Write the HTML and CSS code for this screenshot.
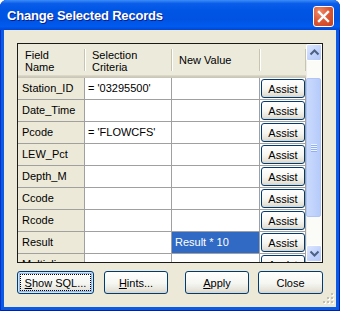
FILE: index.html
```html
<!DOCTYPE html>
<html lang="en">
<head>
  <meta charset="UTF-8">
  <title>Change Selected Records</title>
  <link rel="stylesheet" href="styles.css">
</head>
<body>
  <div class="window">
    <div class="titlebar">
      <span class="title">Change Selected Records</span>
      <span class="close-box">
        <svg width="21" height="21" viewBox="0 0 21 21">
          <path d="M6 6 L15 15 M15 6 L6 15" stroke="#fff" stroke-width="2.4" stroke-linecap="square" fill="none"/>
        </svg>
      </span>
    </div>

    <div class="client">
      <div class="grid">
        <div class="sheet">
          <div class="head">
            <div class="hcell"><span>Field<br>Name</span></div>
            <div class="hcell"><span>Selection<br>Criteria</span></div>
            <div class="hcell"><span class="single">New Value</span></div>
            <div class="hcell"><span></span></div>
          </div>

          <div class="rows">
            <div class="cell field">Station_ID</div>
            <div class="cell">= '03295500'</div>
            <div class="cell"></div>
            <div class="cell act"><button class="assist">Assist</button></div>

            <div class="cell field">Date_Time</div>
            <div class="cell"></div>
            <div class="cell"></div>
            <div class="cell act"><button class="assist">Assist</button></div>

            <div class="cell field">Pcode</div>
            <div class="cell">= 'FLOWCFS'</div>
            <div class="cell"></div>
            <div class="cell act"><button class="assist">Assist</button></div>

            <div class="cell field">LEW_Pct</div>
            <div class="cell"></div>
            <div class="cell"></div>
            <div class="cell act"><button class="assist">Assist</button></div>

            <div class="cell field">Depth_M</div>
            <div class="cell"></div>
            <div class="cell"></div>
            <div class="cell act"><button class="assist">Assist</button></div>

            <div class="cell field">Ccode</div>
            <div class="cell"></div>
            <div class="cell"></div>
            <div class="cell act"><button class="assist">Assist</button></div>

            <div class="cell field">Rcode</div>
            <div class="cell"></div>
            <div class="cell"></div>
            <div class="cell act"><button class="assist">Assist</button></div>

            <div class="cell field">Result</div>
            <div class="cell"></div>
            <div class="cell selected">Result * 10</div>
            <div class="cell act"><button class="assist">Assist</button></div>

            <div class="cell field">Multiplier</div>
            <div class="cell"></div>
            <div class="cell"></div>
            <div class="cell act"><button class="assist">Assist</button></div>
          </div>
        </div>

        <div class="vscroll">
          <div class="sb-btn">
            <svg width="15" height="15" viewBox="0 0 15 15"><path d="M3.5 9.5 L7.5 5.5 L11.5 9.5" stroke="#4D6185" stroke-width="2" fill="none"/></svg>
          </div>
          <div class="track-top"></div>
          <div class="thumb">
            <div class="grip-lines"><i></i><i></i><i></i><i></i></div>
          </div>
          <div class="track-bottom"></div>
          <div class="sb-btn">
            <svg width="15" height="15" viewBox="0 0 15 15"><path d="M3.5 5.5 L7.5 9.5 L11.5 5.5" stroke="#4D6185" stroke-width="2" fill="none"/></svg>
          </div>
        </div>
      </div>

      <div class="actions">
        <button class="btn btn-sql focused"><u>S</u>how SQL...</button>
        <button class="btn btn-hints"><u>H</u>ints...</button>
        <button class="btn btn-apply"><u>A</u>pply</button>
        <button class="btn btn-close">Close</button>
      </div>

      <svg class="size-grip" width="12" height="12" viewBox="0 0 12 12">
        <rect x="9" y="1" width="2" height="2" fill="#fff"/><rect x="8" y="0" width="2" height="2" fill="#C4C0B0"/>
        <rect x="5" y="5" width="2" height="2" fill="#fff"/><rect x="4" y="4" width="2" height="2" fill="#C4C0B0"/>
        <rect x="9" y="5" width="2" height="2" fill="#fff"/><rect x="8" y="4" width="2" height="2" fill="#C4C0B0"/>
        <rect x="1" y="9" width="2" height="2" fill="#fff"/><rect x="0" y="8" width="2" height="2" fill="#C4C0B0"/>
        <rect x="5" y="9" width="2" height="2" fill="#fff"/><rect x="4" y="8" width="2" height="2" fill="#C4C0B0"/>
        <rect x="9" y="9" width="2" height="2" fill="#fff"/><rect x="8" y="8" width="2" height="2" fill="#C4C0B0"/>
      </svg>
    </div>
  </div>
</body>
</html>
```

FILE: styles.css
```css
* {
  box-sizing: border-box;
}
body {
  margin: 0;
  font-family: "Liberation Sans", Arial, sans-serif;
  font-size: 11px;
  color: #000;
  background: #fff;
}
.window {
  width: 340px;
  height: 311px;
  display: flex;
  flex-direction: column;
  background: #0A5AE6;
  border-radius: 7px 7px 0 0;
  overflow: hidden;
  box-shadow: inset 1px 0 #0030C8, inset -1px 0 #0020A8, inset 0 -1px #0020A8;
}
.titlebar {
  height: 30px;
  display: flex;
  justify-content: space-between;
  align-items: flex-start;
  background: linear-gradient(#3C8DF6 0%, #0A5DEA 12%, #0055E5 35%, #0053E2 65%, #005BEF 88%, #0046D5 100%);
}
.title {
  padding-left: 7px;
  line-height: 31px;
  font-size: 13px;
  font-weight: bold;
  letter-spacing: -0.2px;
  color: #fff;
  text-shadow: 1px 1px #0A1E8C;
}
.close-box {
  width: 21px;
  height: 21px;
  margin: 6px 6px 0 0;
  border: 1px solid #fff;
  border-radius: 3px;
  background: radial-gradient(circle at 30% 25%, #EE8B68 0%, #DD5A36 45%, #C8401E 100%);
}
.close-box svg {
  display: block;
  margin: -1px;
}
.client {
  flex: 1;
  position: relative;
  margin: 0 4px 4px;
  padding: 13px 13px 0;
  background: #ECE9D8;
}

/* grid */
.grid {
  display: flex;
  height: 220px;
  border: 1px solid #1A1A1A;
  background: #fff;
}
.sheet {
  width: 288px;
  overflow: hidden;
}
.head,
.rows {
  display: grid;
  grid-template-columns: 67px 87px 88px 46px;
}
.head {
  height: 34px;
  background: linear-gradient(#EBEADB 0, #EBEADB 31px, #E2DECD 31px, #D6D2C2 32px, #CBC7B8 33px);
}
.hcell {
  padding: 6px 0 6px;
}
.hcell span {
  display: block;
  height: 22px;
  padding-left: 7px;
  line-height: 12px;
  margin-top: -1px;
  border-right: 1px solid #C7C5B2;
  box-shadow: 1px 0 #fff;
}
.hcell span.single {
  line-height: 22px;
}
.cell {
  height: 22px;
  padding-left: 3px;
  line-height: 21px;
  white-space: nowrap;
  overflow: hidden;
  border-right: 1px solid #A0A0A0;
  border-bottom: 1px solid #A0A0A0;
}
.cell.field {
  padding-left: 4px;
  background: #ECE9D8;
}
.cell.selected {
  background: #316AC5;
  color: #fff;
}
.cell.act {
  padding: 1px 0 0 1px;
}
.assist {
  display: block;
  width: 44px;
  height: 19px;
  padding: 0;
  font-family: "Liberation Sans", Arial, sans-serif;
  font-size: 11px;
  color: #000;
  border: 1px solid #003C74;
  border-radius: 3px;
  background: linear-gradient(#FFFFFF, #F5F5F1 55%, #E6E4DA 85%, #D8D3C6);
}

/* scrollbar */
.vscroll {
  width: 16px;
  display: flex;
  flex-direction: column;
  background: #FBFBF8;
  box-shadow: inset 1px 0 #EEEDE5;
}
.sb-btn {
  height: 17px;
  border: 1px solid #fff;
  border-radius: 2px;
  background: linear-gradient(135deg, #DDE7FE, #C0D2FC 60%, #B4C8F8);
}
.sb-btn svg {
  display: block;
  margin-top: 0;
}
.track-top {
  height: 17px;
}
.track-bottom {
  height: 28px;
}
.thumb {
  height: 139px;
  margin: 0 1px 0 0;
  border: 1px solid #B0C5F5;
  border-radius: 2px;
  background: linear-gradient(90deg, #CADAFD, #C1D3FC 50%, #B6CBFA);
  display: flex;
  align-items: center;
  justify-content: center;
}
.grip-lines i {
  display: block;
  width: 6px;
  height: 1px;
  margin-bottom: 1px;
  background: #EEF4FE;
  box-shadow: 0 1px #8FB0F4;
}

/* bottom buttons */
.actions {
  display: flex;
  margin-top: 8px;
}
.btn {
  position: relative;
  height: 23px;
  padding: 0;
  font-family: "Liberation Sans", Arial, sans-serif;
  font-size: 11px;
  color: #000;
  border: 1px solid #003C74;
  border-radius: 3px;
  background: linear-gradient(#FFFFFF, #F5F5F1 55%, #E6E4DA 85%, #D8D3C6);
}
.btn-sql {
  width: 77px;
}
.btn-hints {
  width: 64px;
  margin-left: 10px;
}
.btn-apply {
  width: 64px;
  margin-left: 17px;
}
.btn-close {
  width: 65px;
  margin-left: 9px;
}
.btn.focused {
  box-shadow: inset 0 0 0 1px #CEE7FF, inset 0 0 0 2px #98B8EA;
}
.btn.focused::after {
  content: "";
  position: absolute;
  top: 2px;
  left: 2px;
  right: 2px;
  bottom: 2px;
  border: 1px dotted #000;
}
.size-grip {
  position: absolute;
  right: 1px;
  bottom: 2px;
}
```
